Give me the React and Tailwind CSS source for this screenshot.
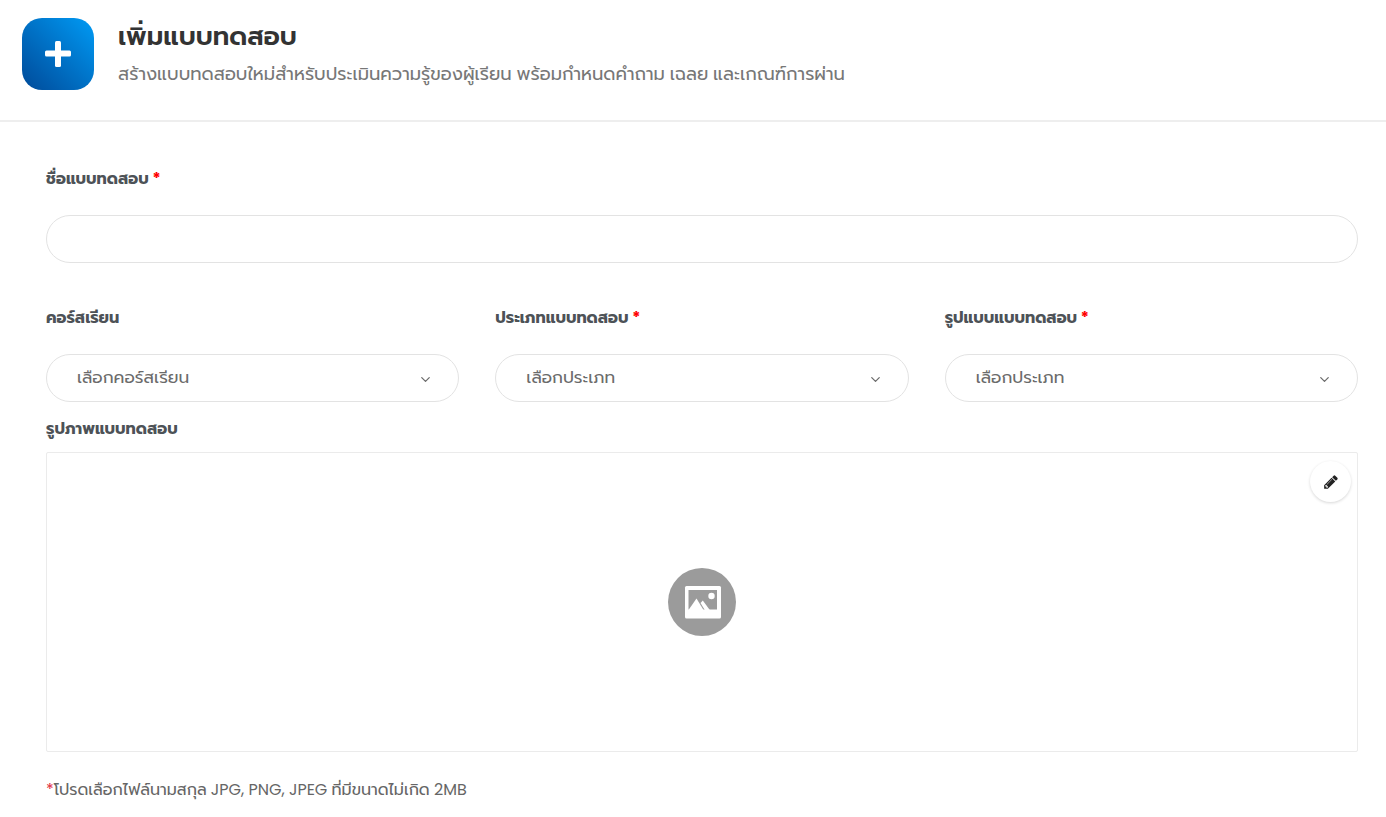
import { LuChevronDown } from "react-icons/lu";

const selects = [
  { id: "course", label: "คอร์สเรียน", placeholder: "เลือกคอร์สเรียน" },
  { id: "type", label: "ประเภทแบบทดสอบ", placeholder: "เลือกประเภท", required: true },
  { id: "format", label: "รูปแบบแบบทดสอบ", placeholder: "เลือกประเภท", required: true },
];

function Label({ htmlFor, required, children }) {
  return (
    <label htmlFor={htmlFor} className="block text-base leading-6 font-bold text-[#4d5257]">
      {children}
      {required && <span className="text-[#ff0000]"> *</span>}
    </label>
  );
}

function SelectField({ id, label, placeholder, required }) {
  return (
    <div>
      <Label htmlFor={id} required={required}>
        {label}
      </Label>
      <div className="relative mt-6">
        <select
          id={id}
          className="block h-12 w-full appearance-none rounded-full border border-[#e3e3e3] bg-white pl-[30px] pr-12 text-[17px] text-[#6b6b6b] outline-none focus:border-[#0096f0]"
        >
          <option>{placeholder}</option>
        </select>
        <LuChevronDown className="pointer-events-none absolute right-[26px] top-[18px] h-[15px] w-[15px] text-[#6b6b6b]" />
      </div>
    </div>
  );
}

function PlusIcon() {
  return (
    <svg viewBox="0 0 26 26" className="h-[26px] w-[26px]" fill="currentColor" aria-hidden="true">
      <rect x="0" y="9.500" width="26" height="6" rx="1.500" />
      <rect x="10" y="0" width="6" height="26" rx="1.500" />
    </svg>
  );
}

function PencilIcon() {
  return (
    <svg viewBox="0 0 1792 1792" className="h-4 w-4" fill="currentColor" aria-hidden="true">
      <path d="M491 1536l91-91-235-235-91 91v107h128v128h107zm523-928q0-22-22-22-10 0-17 7l-542 542q-7 7-7 17 0 22 22 22 10 0 17-7l542-542q7-7 7-17zm-54-192l416 416-832 832h-416v-416zm683 96q0 53-37 90l-166 166-416-416 166-165q36-38 90-38 53 0 91 38l235 234q37 39 37 91z" />
    </svg>
  );
}

function PlaceholderImage() {
  return (
    <svg viewBox="0 0 68 68" className="h-[68px] w-[68px]" aria-hidden="true">
      <circle cx="34" cy="34" r="34" fill="#9b9b9b" />
      <rect x="17" y="18" width="36" height="32.500" rx="1.500" fill="#fff" />
      <path d="M20.500 22h28.500v19.500h-28.500z" fill="#9b9b9b" />
      <path d="M20.500 42l8-11.500 7 11.500z" fill="#fff" />
      <path d="M32.500 35l2.300-2.500 7 9.500h-5z" fill="#fff" />
      <circle cx="43.500" cy="28" r="3.200" fill="#fff" />
    </svg>
  );
}

export default function App() {
  return (
    <div className="min-h-screen bg-white font-['Poppins','Prompt','Noto_Sans_Thai',sans-serif]">
      {/* Page header */}
      <header className="flex items-start gap-6 border-b-2 border-[#eeeeee] px-[22px] pt-[18px] pb-[30px]">
        <div className="flex h-[72px] w-[72px] shrink-0 items-center justify-center rounded-[20px] bg-linear-to-tr from-[#004a99] to-[#009bf5] text-white">
          <PlusIcon />
        </div>
        <div>
          <h1 className="text-[26px] leading-9 font-semibold text-[#333333]">เพิ่มแบบทดสอบ</h1>
          <p className="mt-1 text-lg leading-8 text-[#777777]">
            สร้างแบบทดสอบใหม่สำหรับประเมินความรู้ของผู้เรียน พร้อมกำหนดคำถาม เฉลย และเกณฑ์การผ่าน
          </p>
        </div>
      </header>

      <form className="pt-[45px] pr-7 pb-4 pl-[46px]">
        <Label htmlFor="name" required>
          ชื่อแบบทดสอบ
        </Label>
        <input
          id="name"
          type="text"
          className="mt-6 block h-12 w-full rounded-full border border-[#e3e3e3] bg-white px-[30px] text-[17px] text-[#6b6b6b] outline-none focus:border-[#0096f0]"
        />

        <div className="mt-[43px] grid grid-cols-3 gap-9">
          {selects.map((item) => (
            <SelectField key={item.id} {...item} />
          ))}
        </div>

        {/* Cover image */}
        <div className="mt-[15px]">
          <Label htmlFor="image">รูปภาพแบบทดสอบ</Label>
          <div className="relative mt-[11px] flex h-[300px] items-center justify-center rounded-xs border border-[#ebebeb]">
            <PlaceholderImage />
            <button
              id="image"
              type="button"
              aria-label="แก้ไขรูปภาพ"
              className="absolute top-2 right-1.5 flex h-[41px] w-[41px] cursor-pointer items-center justify-center rounded-full bg-white text-[#222222] shadow-[0_1px_3px_rgba(0,0,0,0.16)]"
            >
              <PencilIcon />
            </button>
          </div>
          <p className="mt-6 text-base leading-7 text-[#666666]">
            <span className="text-[#e02b3c]">*</span>
            โปรดเลือกไฟล์นามสกุล JPG, PNG, JPEG ที่มีขนาดไม่เกิด 2MB
          </p>
        </div>
      </form>
    </div>
  );
}
